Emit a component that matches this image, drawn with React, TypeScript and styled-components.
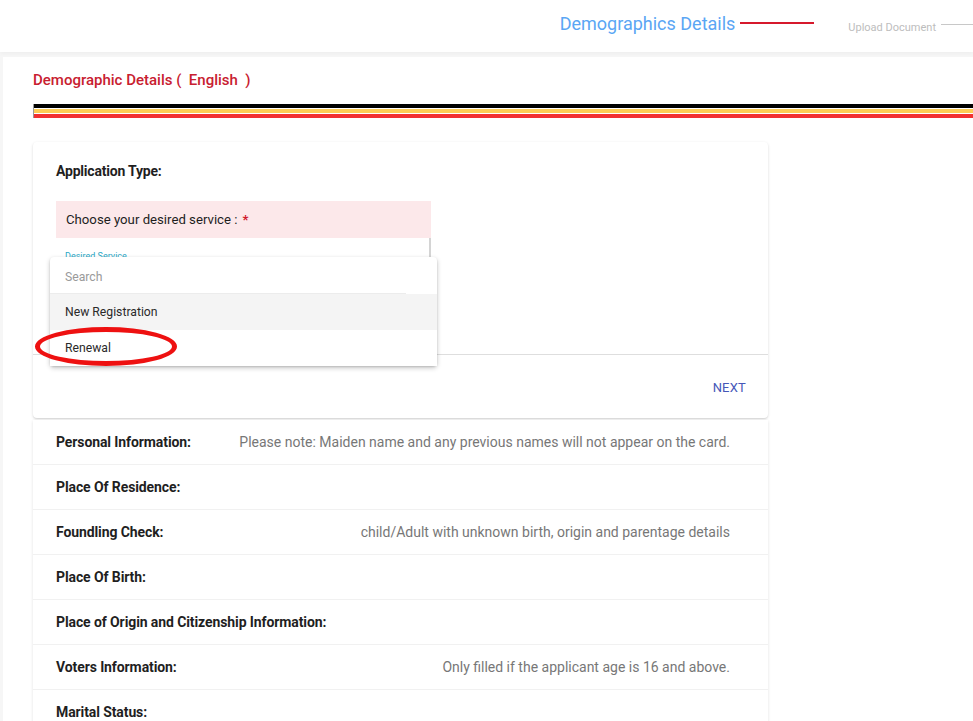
import styled, { createGlobalStyle } from 'styled-components';

const GlobalStyle = createGlobalStyle`
  html, body {
    margin: 0;
    padding: 0;
    background: #f6f6f6;
    font-family: Roboto, "Liberation Sans", Arial, sans-serif;
    color: #222;
  }
  * { box-sizing: border-box; }
`;

const sections = [
  { label: 'Personal Information:', note: 'Please note: Maiden name and any previous names will not appear on the card.' },
  { label: 'Place Of Residence:', note: '' },
  { label: 'Foundling Check:', note: 'child/Adult with unknown birth, origin and parentage details' },
  { label: 'Place Of Birth:', note: '' },
  { label: 'Place of Origin and Citizenship Information:', note: '' },
  { label: 'Voters Information:', note: 'Only filled if the applicant age is 16 and above.' },
  { label: 'Marital Status:', note: '' },
];

const App = () => {
  return (
    <>
      <GlobalStyle />
      <Page>
        <Stepper>
          <Step active>
            <span>Demographics Details</span>
            <StepLine active />
          </Step>
          <Step>
            <span>Upload Document</span>
            <StepLine />
          </Step>
        </Stepper>

        <Main>
          <Panel>
            <PanelTitle>Demographic Details (&nbsp; English &nbsp;)</PanelTitle>
            <Flag>
              <Stripe color="#000" />
              <Stripe color="#fdcd55" />
              <Stripe color="#f23131" />
            </Flag>

            <Card>
              <CardBody>
                <SectionLabel>Application Type:</SectionLabel>
                <Prompt>
                  Choose your desired service : <Required>*</Required>
                </Prompt>
                <Field>
                  <FieldLabel>Desired Service</FieldLabel>
                  <Dropdown>
                    <SearchRow>Search</SearchRow>
                    <Option selected>New Registration</Option>
                    <Option>
                      Renewal
                      <Circle />
                    </Option>
                  </Dropdown>
                </Field>
              </CardBody>
              <CardFooter>
                <NextButton>NEXT</NextButton>
              </CardFooter>
            </Card>

            <ListCard>
              {sections.map((s) => (
                <Row key={s.label}>
                  <RowLabel>{s.label}</RowLabel>
                  {s.note && <RowNote>{s.note}</RowNote>}
                </Row>
              ))}
            </ListCard>
          </Panel>
        </Main>
      </Page>
    </>
  );
};

const Page = styled.div`
  width: 100%;
  height: 721px;
  overflow: hidden;
`;

const Stepper = styled.div`
  height: 52px;
  background: #fff;
  display: flex;
  justify-content: flex-end;
  align-items: flex-start;
  padding-top: 11px;
  gap: 34px;
  box-shadow: 0 2px 4px rgba(0, 0, 0, 0.03);
`;

const Step = styled.div<{ active?: boolean }>`
  display: flex;
  align-items: center;
  gap: 5px;
  height: 24px;
  span {
    font-size: ${(p) => (p.active ? '18px' : '11px')};
    color: ${(p) => (p.active ? '#5aa6f4' : '#bdbdbd')};
    ${(p) => (!p.active ? 'margin-top: 8px;' : '')}
    white-space: nowrap;
  }
`;

const StepLine = styled.div<{ active?: boolean }>`
  width: ${(p) => (p.active ? '74px' : '32px')};
  height: ${(p) => (p.active ? '2px' : '1px')};
  background: ${(p) => (p.active ? '#d6192c' : '#c8c8c8')};
  margin-top: ${(p) => (p.active ? '0' : '2px')};
`;

const Main = styled.div`
  padding: 5px 0 0 3px;
`;

const Panel = styled.div`
  background: #fff;
  padding: 13px 0 0 30px;
  min-height: 700px;
`;

const PanelTitle = styled.div`
  font-size: 15px;
  font-weight: 500;
  color: #c8202f;
  line-height: 20px;
`;

const Flag = styled.div`
  margin-top: 14px;
  display: flex;
  flex-direction: column;
  gap: 1px;
  border-left: 1px solid #999;
`;

const Stripe = styled.div<{ color: string }>`
  height: 4px;
  background: ${(p) => p.color};
`;

const Card = styled.div`
  margin-top: 24px;
  width: 735px;
  background: #fff;
  border-radius: 4px;
  box-shadow: 0 1px 3px rgba(0, 0, 0, 0.14), 0 1px 1px rgba(0, 0, 0, 0.06);
`;

const CardBody = styled.div`
  padding: 20px 23px 0;
  height: 213px;
  border-bottom: 1px solid #dedede;
`;

const SectionLabel = styled.div`
  font-size: 14px;
  font-weight: 700;
  line-height: 18px;
  color: #1f1f1f;
  letter-spacing: -0.2px;
`;

const Prompt = styled.div`
  margin-top: 21px;
  width: 375px;
  height: 37px;
  background: #fce8ea;
  display: flex;
  align-items: center;
  gap: 5px;
  padding-left: 10px;
  font-size: 13.2px;
  color: #1e1e1e;
`;

const Required = styled.span`
  color: #d0182a;
  font-weight: 700;
`;

const Field = styled.div`
  position: relative;
  width: 375px;
  height: 60px;
  background: #fff;
  border-right: 2px solid #d4d4d4;
  padding: 13px 0 0 9px;
`;

const FieldLabel = styled.div`
  font-size: 9px;
  color: #2ba8c5;
  line-height: 10px;
`;

const Dropdown = styled.div`
  position: absolute;
  left: -6px;
  top: 19px;
  width: 387px;
  background: #fff;
  border-radius: 4px;
  box-shadow: 0 2px 5px rgba(0, 0, 0, 0.22), 0 1px 2px rgba(0, 0, 0, 0.12);
  z-index: 2;
`;

const SearchRow = styled.div`
  height: 37px;
  display: flex;
  align-items: center;
  padding: 3px 0 0 15px;
  font-size: 12.2px;
  color: #9a9a9a;
  border-bottom: 1px solid #ececec;
  margin-right: 31px;
`;

const Option = styled.div<{ selected?: boolean }>`
  position: relative;
  height: 36px;
  display: flex;
  align-items: center;
  padding-left: 15px;
  font-size: 12.2px;
  color: #2a2a2a;
  background: ${(p) => (p.selected ? '#f4f4f4' : '#fff')};
`;

const Circle = styled.div`
  position: absolute;
  left: -15px;
  top: -3px;
  width: 142px;
  height: 39px;
  border: 5px solid #ee1111;
  border-radius: 50%;
  pointer-events: none;
`;

const CardFooter = styled.div`
  height: 63px;
  display: flex;
  justify-content: flex-end;
  align-items: center;
  padding: 2px 22px 0 0;
`;

const NextButton = styled.div`
  font-size: 13px;
  color: #4557b8;
  letter-spacing: 0.2px;
`;

const ListCard = styled.div`
  margin-top: 2px;
  width: 735px;
  background: #fff;
  box-shadow: 0 1px 3px rgba(0, 0, 0, 0.12);
`;

const Row = styled.div`
  height: 45px;
  display: flex;
  align-items: center;
  justify-content: space-between;
  padding: 0 38px 0 23px;
  border-bottom: 1px solid #f1f1f1;
`;

const RowLabel = styled.div`
  font-size: 14px;
  font-weight: 700;
  color: #1f1f1f;
  letter-spacing: -0.1px;
`;

const RowNote = styled.div`
  font-size: 14px;
  color: #777;
`;

export default App;
